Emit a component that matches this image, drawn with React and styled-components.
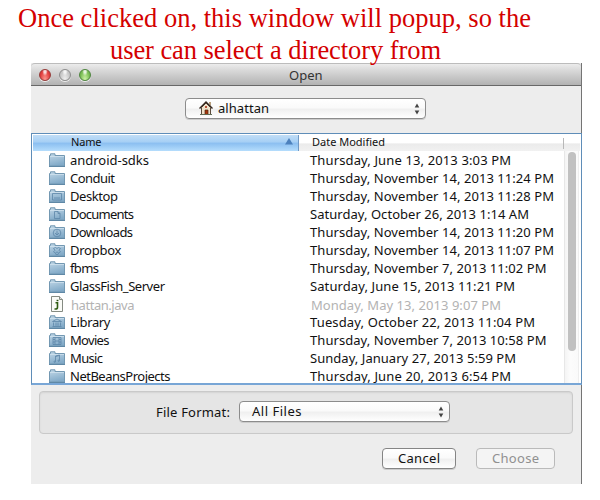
import React, { useLayoutEffect, useRef, useState } from "react";
import styled, { createGlobalStyle } from "styled-components";

const GlobalStyle = createGlobalStyle`
  * { box-sizing: border-box; }
  body {
    margin: 0;
    width: 600px;
    height: 500px;
    overflow: hidden;
    background: #fff;
    color: #111;
    font: 13px/18px "Noto Sans", "Open Sans", sans-serif;
  }
`;

const Page = styled.main`
  width: 600px;
  height: 500px;
  overflow: hidden;
  display: flex;
  flex-direction: column;
`;

const Caption = styled.h1`
  margin: 0;
  height: 63px;
  padding-top: 2px;
  display: flex;
  flex-direction: column;
  color: #d40000;
  font: 400 26.5px/32px "Liberation Serif", serif;
  position: relative;
  z-index: 1;
`;

const CaptionLine = styled.span`
  padding-left: ${(p) => p.$indent}px;
  height: 32px;
`;

const Window = styled.section`
  width: 551px;
  height: 421px;
  margin-left: 31px;
  display: flex;
  flex-direction: column;
  background: #ededed;
  border-right: 1px solid #747474;
`;

const TitleBar = styled.header`
  height: 23px;
  flex: none;
  display: flex;
  align-items: center;
  border-top: 1px solid #bcbcbc;
  border-bottom: 1px solid #686868;
  border-radius: 4px 4px 0 0;
  background: linear-gradient(#ececec, #dcdcdc 25%, #b2b2b2);
  color: #333;
`;

const Lights = styled.div`
  width: 258px;
  flex: none;
  display: flex;
  gap: 8px;
  padding: 1px 0 0 8px;
`;

const Light = styled.i`
  width: 12px;
  height: 12px;
  border-radius: 50%;
  border: 1px solid ${(p) => p.$edge};
  background:
    radial-gradient(ellipse at 50% 12%, #fffc 0 14%, transparent 38%),
    radial-gradient(ellipse at 50% 95%, ${(p) => p.$glow}, ${(p) => p.$fill} 70%);
  box-shadow: 0 1px 0 #eee;
`;

const PathBar = styled.div`
  height: 47px;
  flex: none;
  padding: 12px 0 0 154px;
`;

const Select = styled.button`
  width: ${(p) => p.$width}px;
  height: 21px;
  display: flex;
  align-items: center;
  padding: 0 5px 0 ${(p) => p.$inset}px;
  border: 1px solid #8c8c8c;
  border-radius: 4px;
  background: linear-gradient(#fff, #fafafa 45%, #f0f0f0 55%, #fff);
  box-shadow: 0 1px 0 #ccc;
  font: inherit;
  color: #111;
  text-align: left;
`;

const SelectLabel = styled.span`
  flex: 1;
  display: flex;
  gap: 5px;
  align-items: center;
  padding-bottom: 1px;
`;

const Browser = styled.div`
  height: 252px;
  flex: none;
  display: flex;
  flex-direction: column;
  margin-right: -1px;
  border: 1px solid #5f8db8;
  border-bottom: 2px solid #78a6d6;
  padding: 1px 1px 0;
  background: #fff;
`;

const Columns = styled.div`
  height: 16px;
  flex: none;
  display: grid;
  grid-template-columns: 266px 265px 1fr;
  font-size: 11px;
  line-height: 13px;
`;

const ColumnHead = styled.div`
  display: flex;
  justify-content: space-between;
  align-items: center;
  padding: 0 5px 3px ${(p) => p.$inset}px;
  background: ${(p) =>
    p.$sorted
      ? "linear-gradient(#c1ddf6, #a5cff5 45%, #8abef0 50%, #b5ddfc)"
      : "linear-gradient(#fff, #fff 50%, #ebebeb 55%, #f1f1f1)"};
  border-right: ${(p) => (p.$sorted ? "1px solid #7099c5" : "0")};
`;

const HeadEnd = styled(ColumnHead)`
  padding: 0;
  justify-content: flex-start;
`;

const Divider = styled.i`
  width: 1px;
  height: 11px;
  margin-left: -1px;
  background: #b8b8b8;
`;

const Body = styled.div`
  flex: 1;
  min-height: 0;
  display: grid;
  grid-template-columns: 531px 15px;
  overflow: hidden;
`;

const Rows = styled.div`
  display: flex;
  flex-direction: column;
`;

const Row = styled.div`
  height: 18px;
  flex: none;
  display: grid;
  grid-template-columns: 21px 240px 1fr;
  padding-left: 16px;
  align-items: center;
  color: ${(p) => (p.$disabled ? "#b3b3b3" : "#111")};
`;

const Cell = styled.span`
  height: 18px;
  padding: ${(p) => (p.$disabled ? "1px 0 0 1px" : "0")};
`;

const ScrollTrack = styled.div`
  padding: 1px 3px 0 3px;
  border-left: 1px solid #e7e7e7;
  border-right: 1px solid #eee;
  background: linear-gradient(90deg, #f4f4f4, #fcfcfc 40%, #fafafa);
`;

const ScrollThumb = styled.div`
  width: 8px;
  height: 199px;
  border-radius: 4px;
  background: #c1c1c1;
`;

const FormatPanel = styled.div`
  width: 534px;
  height: 43px;
  flex: none;
  margin: 6px 0 0 8px;
  display: grid;
  grid-template-columns: 83px 1fr;
  align-items: start;
  padding: 9px 0 0 116px;
  border: 1px solid #c9c9c9;
  border-radius: 4px;
  background: #e5e5e5;
  box-shadow: inset 0 1px 2px #d3d3d3;
`;

const FieldLabel = styled.label`
  line-height: 18px;
  padding-top: 2px;
`;

const Actions = styled.footer`
  display: flex;
  gap: 20px;
  padding: 14px 0 0 351px;
`;

const Button = styled.button`
  width: ${(p) => p.$width}px;
  height: 21px;
  padding: 0 0 1px;
  display: flex;
  justify-content: center;
  align-items: center;
  border: 1px solid #858585;
  border-radius: 4px;
  background: linear-gradient(#fff, #fafafa 45%, #f0f0f0 55%, #fff);
  box-shadow: 0 1px 0 #ccc;
  font: inherit;
  color: #111;
  &:disabled {
    color: #909090;
    border-color: #bababa;
    background: #f4f4f4;
    box-shadow: none;
  }
`;

const Tracked = styled.span`
  display: inline-block;
  white-space: pre;
`;

// Spreads the letters of a label so that it spans the given width.
function Label({ width, children }) {
  const ref = useRef(null);
  const [spacing, setSpacing] = useState(0);
  useLayoutEffect(() => {
    const natural = ref.current.getBoundingClientRect().width;
    setSpacing((width - natural) / (children.length - 1));
  }, [width, children]);
  return (
    <Tracked ref={ref} style={{ letterSpacing: `${spacing}px`, marginRight: `${-spacing}px` }}>
      {children}
    </Tracked>
  );
}

const Arrows = () => (
  <svg width="6" height="12" viewBox="0 0 6 12" fill="#444">
    <path d="M3 0.5L5.3 4.5H0.7ZM3 11.5L0.7 7.5H5.3Z" />
  </svg>
);

const House = () => (
  <svg width="14" height="14" viewBox="0 0 14 14">
    <path d="M10 1h2v4l-2-2z" fill="#b9a17e" />
    <path d="M2.5 6.5L7 2l4.5 4.5v7h-9z" fill="#efe2ca" stroke="#5b4a3b" />
    <path d="M.5 7.5L7 1l6.5 6.5" fill="none" stroke="#33261e" strokeWidth="1.4" />
    <path d="M6 9h3v4.5H6z" fill="#a5360d" stroke="#4c2511" strokeWidth=".7" />
    <path d="M6 5h2v2H6z" fill="#b6553c" />
    <path d="M1 13.5h12" stroke="#62705a" />
  </svg>
);

const emblems = {
  desktop: <path d="M3.5 4.5h9v6.5h-9zM5 9h6" />,
  document: <path d="M5.5 4.5H9l2 2v5H5.5zM9 4.5v2h2" />,
  download: (
    <>
      <circle cx="8" cy="8" r="3.8" />
      <path d="M8 5.5v4.3M6 8l2 2 2-2" />
    </>
  ),
  dropbox: <path d="M4.5 5.5L6.5 4.5 8 5.5 9.5 4.5 11.5 5.5 10 7.2 11.5 8.8 9.5 10 8 8.8 6.5 10 4.5 8.8 6 7.2ZM6 10.5l2 1.3 2-1.3" />,
  library: <path d="M3.5 6.5L8 4l4.5 2.5zM4.5 7.5v3.3M7 7.5v3.3M9 7.5v3.3M11.5 7.5v3.3M3.5 11.5h9" />,
  movie: <path d="M4 4.5h8v7H4zM6 4.5v7M10 4.5v7M6 8h4M4 6.5h2M4 9h2M10 6.5h2M10 9h2" />,
  music: (
    <>
      <path d="M6.5 10.5V5l4-1v5.5M6.5 5.5l4-1" />
      <circle cx="5.7" cy="10.7" r=".7" />
      <circle cx="9.7" cy="9.7" r=".7" />
    </>
  ),
};

const Folder = ({ emblem }) => (
  <svg width="16" height="14" viewBox="0 0 16 14">
    <defs>
      <linearGradient id="folder" x1="0" y1="0" x2=".3" y2="1">
        <stop offset="0" stopColor="#c3d9e8" />
        <stop offset="1" stopColor="#82aac8" />
      </linearGradient>
    </defs>
    <path d="M.5 13V2.5h1V.8H6v1.7h9.5V13z" fill="url(#folder)" stroke="#7398b2" />
    <path d="M1 3.5h14" stroke="#d5e5f0" strokeWidth=".7" />
    <path d="M0 13.5h16" stroke="#5f88a6" />
    <g fill="none" stroke="#5d86a8" strokeWidth=".8">{emblems[emblem]}</g>
  </svg>
);

const JavaFile = () => (
  <svg width="16" height="16" viewBox="0 0 16 16">
    <path d="M2.5.5h8l3 3v12h-11z" fill="#fafbf7" stroke="#858b82" />
    <path d="M10.5.5v3h3" fill="#ddd" stroke="#858b82" />
    <path d="M6.5 6.8h2v4.4q0 1.8-2 1.8H5.5" fill="none" stroke="#315d12" strokeWidth="1.6" />
    <path d="M7.6 3.8h1.8v1.4H7.6z" fill="#244c0a" />
  </svg>
);

const files = [
  ["android-sdks", 79, "Thursday, June 13, 2013 3:03 PM", 201],
  ["Conduit", 45, "Thursday, November 14, 2013 11:24 PM", 244],
  ["Desktop", 48, "Thursday, November 14, 2013 11:28 PM", 244, "desktop"],
  ["Documents", 64, "Saturday, October 26, 2013 1:14 AM", 219, "document"],
  ["Downloads", 63, "Thursday, November 14, 2013 11:20 PM", 244, "download"],
  ["Dropbox", 51.5, "Thursday, November 14, 2013 11:07 PM", 244, "dropbox"],
  ["fbms", 29, "Thursday, November 7, 2013 11:02 PM", 236.5],
  ["GlassFish_Server", 95, "Saturday, June 15, 2013 11:21 PM", 205],
  ["hattan.java", 63.5, "Monday, May 13, 2013 9:07 PM", 190, "java"],
  ["Library", 40.5, "Tuesday, October 22, 2013 11:04 PM", 225, "library"],
  ["Movies", 39.5, "Thursday, November 7, 2013 10:58 PM", 236.5, "movie"],
  ["Music", 33, "Sunday, January 27, 2013 5:59 PM", 206, "music"],
  ["NetBeansProjects", 100.5, "Thursday, June 20, 2013 6:54 PM", 201],
];

export default function App() {
  return (
    <Page>
      <GlobalStyle />
      <Caption>
        <CaptionLine $indent={18}>
          <Label width={513}>Once clicked on, this window will popup, so the</Label>
        </CaptionLine>
        <CaptionLine $indent={110}>
          <Label width={331}>user can select a directory from</Label>
        </CaptionLine>
      </Caption>
      <Window>
        <TitleBar>
          <Lights>
            <Light $edge="#963a38" $fill="#df3a3a" $glow="#ff9a91" />
            <Light $edge="#8d8d8d" $fill="#c5c5c5" $glow="#f1f1f1" />
            <Light $edge="#4e853e" $fill="#75b950" $glow="#d0f6a8" />
          </Lights>
          <Label width={33.5}>Open</Label>
        </TitleBar>
        <PathBar>
          <Select $width={241} $inset={13}>
            <SelectLabel>
              <House />
              <Label width={51}>alhattan</Label>
            </SelectLabel>
            <Arrows />
          </Select>
        </PathBar>
        <Browser>
          <Columns>
            <ColumnHead $sorted $inset={38}>
              <Label width={30.5}>Name</Label>
              <svg width="8" height="7" viewBox="0 0 8 7">
                <path d="M4 0l4 6.5H0z" fill="#4c81bd" />
              </svg>
            </ColumnHead>
            <ColumnHead $inset={13}>
              <Label width={73}>Date Modified</Label>
            </ColumnHead>
            <HeadEnd>
              <Divider />
            </HeadEnd>
          </Columns>
          <Body>
            <Rows>
              {files.map(([name, nameWidth, date, dateWidth, kind]) => {
                const disabled = kind === "java";
                return (
                  <Row key={name} $disabled={disabled}>
                    {disabled ? <JavaFile /> : <Folder emblem={kind} />}
                    <Cell $disabled={disabled}>
                      <Label width={nameWidth}>{name}</Label>
                    </Cell>
                    <Cell $disabled={disabled}>
                      <Label width={dateWidth}>{date}</Label>
                    </Cell>
                  </Row>
                );
              })}
            </Rows>
            <ScrollTrack>
              <ScrollThumb />
            </ScrollTrack>
          </Body>
        </Browser>
        <FormatPanel>
          <FieldLabel>
            <Label width={74}>File Format:</Label>
          </FieldLabel>
          <Select $width={211} $inset={12}>
            <SelectLabel>
              <Label width={49.5}>All Files</Label>
            </SelectLabel>
            <Arrows />
          </Select>
        </FormatPanel>
        <Actions>
          <Button $width={74}>
            <Label width={42}>Cancel</Label>
          </Button>
          <Button $width={79} disabled>
            <Label width={47}>Choose</Label>
          </Button>
        </Actions>
      </Window>
    </Page>
  );
}
